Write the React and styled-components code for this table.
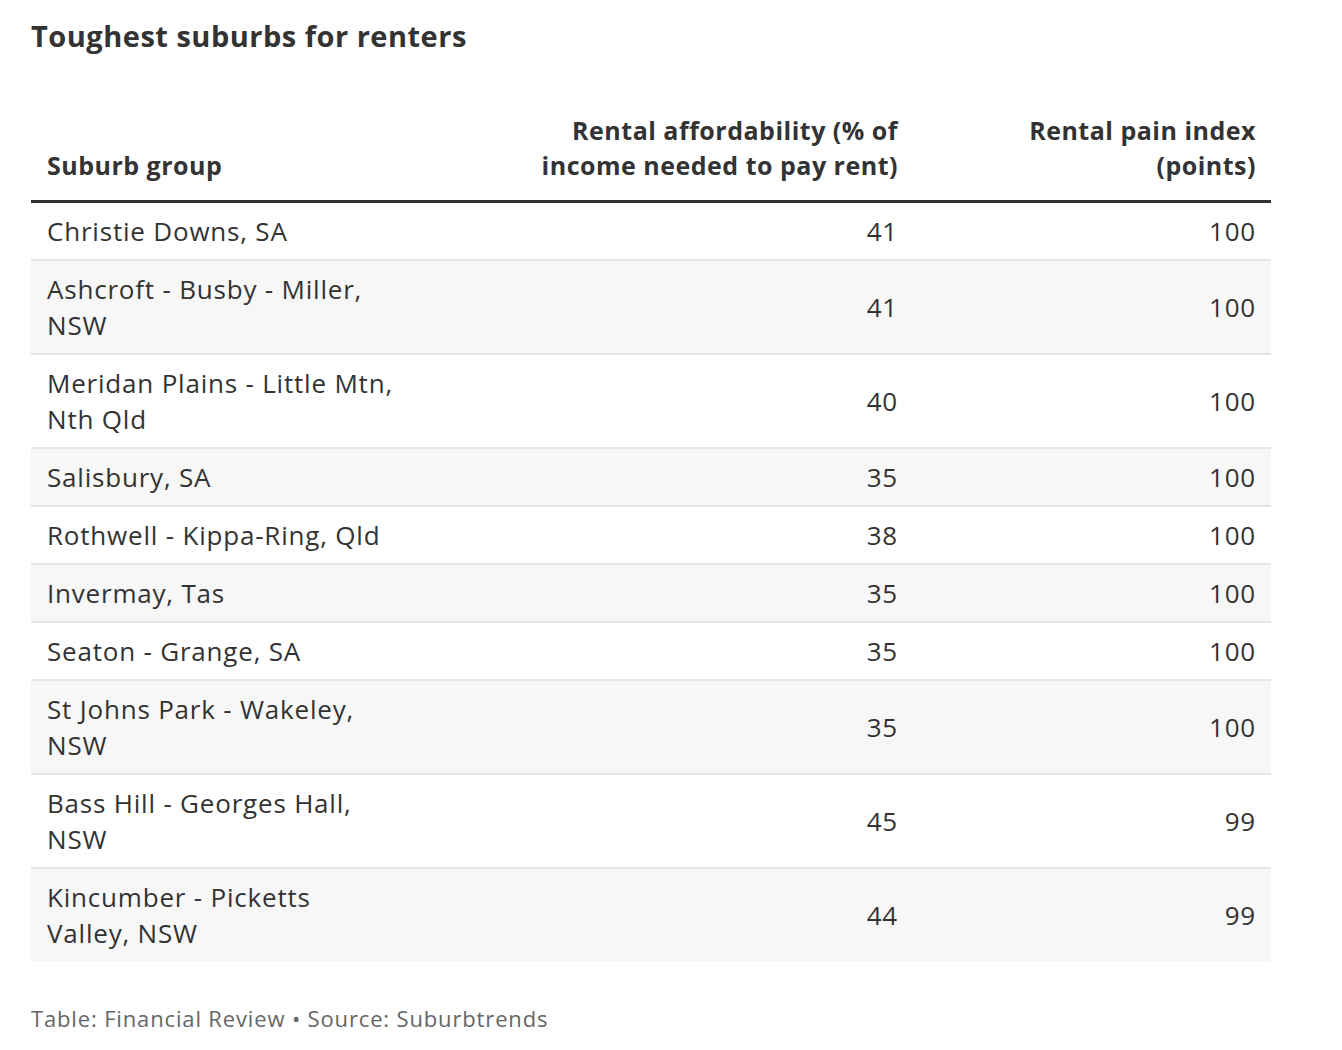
import styled, { createGlobalStyle } from 'styled-components'

const Global = createGlobalStyle`
  body {
    margin: 0;
    background: #fff;
    font-family: "Open Sans", "Liberation Sans", sans-serif;
    color: #333;
  }
`

const Wrap = styled.div`
  padding: 18px 71px 0 31px;
`

const Title = styled.h1`
  margin: 0;
  font-size: 29px;
  line-height: 36px;
  font-weight: 700;
  letter-spacing: 0.5px;
  color: #333;
`

const Table = styled.table`
  margin-top: 42px;
  width: 1240px;
  border-collapse: collapse;
  table-layout: fixed;
`

const HeadCell = styled.th`
  box-sizing: border-box;
  width: ${p => p.w}px;
  padding: 17px ${p => (p.align === 'right' ? 15 : 16)}px 17px 16px;
  text-align: ${p => p.align || 'left'};
  vertical-align: bottom;
  font-size: 25px;
  line-height: 35px;
  font-weight: 700;
  letter-spacing: 0.5px;
  color: #333;
  white-space: pre-line;
  border-bottom: 3px solid #333;
`

const Row = styled.tr`
  background: ${p => (p.striped ? '#f7f7f7' : '#fff')};
  border-bottom: ${p => (p.last ? 'none' : '2px solid #e6e6e6')};
`

const Cell = styled.td`
  padding: 10px ${p => (p.align === 'right' ? 15 : 16)}px 10px 16px;
  text-align: ${p => p.align || 'left'};
  vertical-align: middle;
  font-size: 26px;
  line-height: 36px;
  letter-spacing: 0.8px;
  color: #333;
  white-space: pre-line;
`

const Footer = styled.p`
  margin: 43px 0 0;
  font-size: 22px;
  line-height: 28px;
  letter-spacing: 0.85px;
  color: #666;
`

const rows = [
  ['Christie Downs, SA', 41, 100],
  ['Ashcroft - Busby - Miller,\nNSW', 41, 100],
  ['Meridan Plains - Little Mtn,\nNth Qld', 40, 100],
  ['Salisbury, SA', 35, 100],
  ['Rothwell - Kippa-Ring, Qld', 38, 100],
  ['Invermay, Tas', 35, 100],
  ['Seaton - Grange, SA', 35, 100],
  ['St Johns Park - Wakeley,\nNSW', 35, 100],
  ['Bass Hill - Georges Hall,\nNSW', 45, 99],
  ['Kincumber - Picketts\nValley, NSW', 44, 99],
]

export default function App() {
  return (
    <>
      <Global />
      <Wrap>
        <Title>Toughest suburbs for renters</Title>
        <Table>
          <thead>
            <tr>
              <HeadCell w={400}>Suburb group</HeadCell>
              <HeadCell w={482} align="right">{'Rental affordability (% of\nincome needed to pay rent)'}</HeadCell>
              <HeadCell w={358} align="right">{'Rental pain index\n(points)'}</HeadCell>
            </tr>
          </thead>
          <tbody>
            {rows.map((r, i) => (
              <Row key={i} striped={i % 2 === 1} last={i === rows.length - 1}>
                <Cell>{r[0]}</Cell>
                <Cell align="right">{r[1]}</Cell>
                <Cell align="right">{r[2]}</Cell>
              </Row>
            ))}
          </tbody>
        </Table>
        <Footer>Table: Financial Review • Source: Suburbtrends</Footer>
      </Wrap>
    </>
  )
}
